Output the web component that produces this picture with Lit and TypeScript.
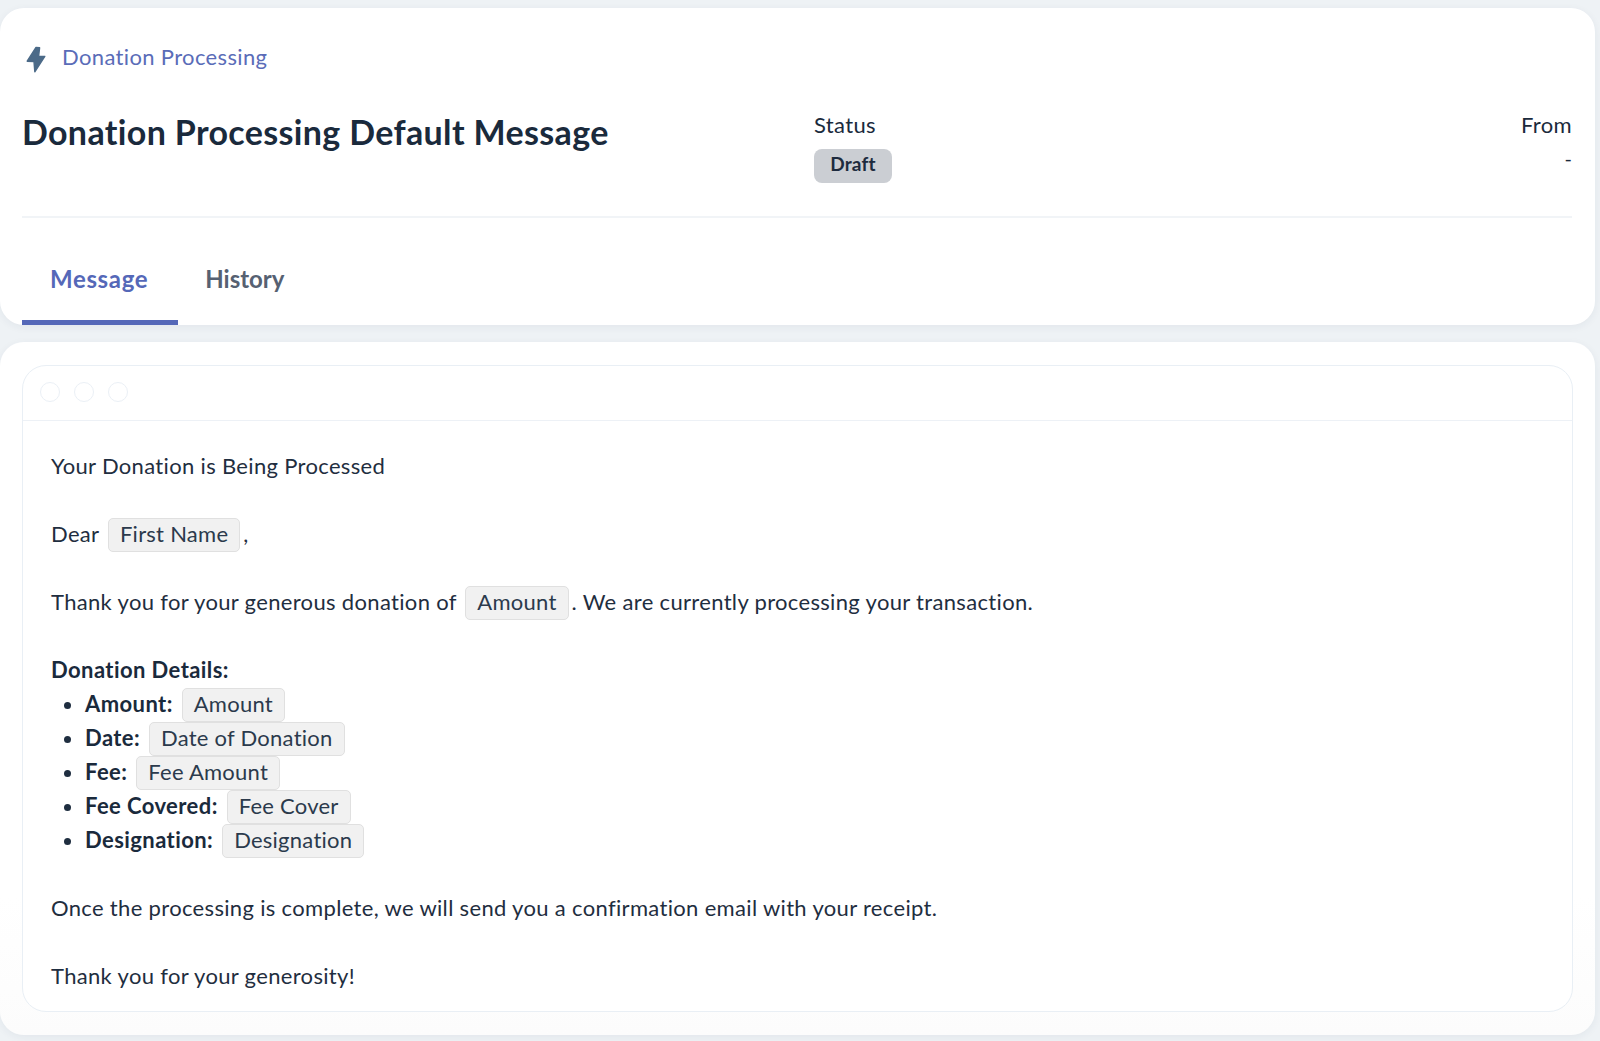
import { LitElement, html, css } from "lit";
import { customElement } from "lit/decorators.js";

const chip = (t: string) => html`<span class="chip">${t}</span>`;

@customElement("app-root")
export class AppRoot extends LitElement {
  static styles = css`
    :host { display: block; min-height: 1041px; background: #eef2f5; font-family: Lato, "Liberation Sans", sans-serif; color: #1a2a3c; box-sizing: border-box; padding: 8px 5px 6px 0; }
    * { box-sizing: border-box; }
    .card { background: #fff; border-radius: 24px; box-shadow: 0 2px 8px rgba(30, 50, 80, 0.06); }
    .top { height: 317px; padding: 0 23px 0 22px; display: flex; flex-direction: column; margin-bottom: 17px; }
    .crumb { display: flex; align-items: center; gap: 16px; padding: 37px 0 0 4px; height: 66px; font-size: 22px; letter-spacing: 0.35px; color: #5a6cb8; }
    .crumb span { margin-bottom: 6px; }
    .crumb svg { width: 20px; height: 27px; flex: none; }
    .head { display: grid; grid-template-columns: 792px 1fr auto; height: 144px; border-bottom: 2px solid #f1f4f7; padding-top: 36px; }
    h1 { margin: 0; font-size: 34px; line-height: 44px; font-weight: 700; letter-spacing: 0.35px; color: #1a2a3c; }
    .label { font-size: 22px; line-height: 30px; letter-spacing: 0.35px; }
    .from { text-align: right; }
    .dash { font-size: 20px; line-height: 24px; margin-top: 6px; }
    .pill { display: inline-flex; align-items: center; justify-content: center; margin-top: 9px; width: 78px; height: 34px; border-radius: 8px; background: #cbced3; font-size: 19px; font-weight: 700; letter-spacing: 0.2px; color: #1d2b3e; padding-bottom: 5px; }
    .tabs { display: flex; }
    .tab { height: 107px; padding: 19px 29px 0 27px; display: flex; align-items: center; font-size: 24px; font-weight: 700; color: #566172; border-bottom: 5px solid transparent; }
    .tab.on { color: #5568b8; border-bottom-color: #5568b8; padding-left: 28px; padding-right: 30px; letter-spacing: 0.65px; }
    .main { height: 693px; padding: 23px 22px 23px; background: linear-gradient(#fff 80%, #fcfcfc); }
    .win { height: 647px; border: 1px solid #e9eff5; border-radius: 24px; background: #fff; }
    .bar { height: 55px; border-bottom: 1px solid #edf1f6; display: flex; align-items: center; gap: 14px; padding: 0 17px 2px; }
    .dot { width: 20px; height: 20px; border-radius: 50%; border: 1px solid #ebf0f6; }
    .body { padding: 28px 28px 0; font-size: 22px; line-height: 34px; letter-spacing: 0.33px; color: #1f2e40; }
    p { margin: 0 0 34px; }
    p.tight { margin: 0; }
    ul { margin: 0 0 34px; padding: 0 0 0 34px; }
    li { height: 34px; }
    b { font-weight: 700; color: #1a2a3c; letter-spacing: 0.42px; }
    .chip { display: inline-block; height: 34px; line-height: 30px; padding: 0 11px; margin: 0 3px -1px; border: 1px solid #e0e0e0; border-radius: 5px; background: #f1f1f1; color: #2b3a4c; vertical-align: baseline; letter-spacing: 0.25px; }
  `;

  render() {
    return html`
      <section class="card top">
        <div class="crumb">
          <svg viewBox="0 0 20 27"><path d="M10 1.5 1.2 15.2 8 15.6 8.8 25.8 18.8 10.4 12.6 10.2 13.6 1.8Z" fill="#4b6a88" stroke="#4b6a88" stroke-width="1.4" stroke-linejoin="round"/></svg>
          <span>Donation Processing</span>
        </div>
        <div class="head">
          <h1>Donation Processing Default Message</h1>
          <div>
            <div class="label">Status</div>
            <span class="pill">Draft</span>
          </div>
          <div class="from">
            <div class="label">From</div>
            <div class="dash">-</div>
          </div>
        </div>
        <nav class="tabs">
          <div class="tab on">Message</div>
          <div class="tab">History</div>
        </nav>
      </section>
      <section class="card main">
        <div class="win">
          <div class="bar"><span class="dot"></span><span class="dot"></span><span class="dot"></span></div>
          <div class="body">
            <p>Your Donation is Being Processed</p>
            <p>Dear ${chip("First Name")},</p>
            <p>Thank you for your generous donation of ${chip("Amount")}. We are currently processing your transaction.</p>
            <p class="tight"><b>Donation Details:</b></p>
            <ul>
              <li><b>Amount:</b> ${chip("Amount")}</li>
              <li><b>Date:</b> ${chip("Date of Donation")}</li>
              <li><b>Fee:</b> ${chip("Fee Amount")}</li>
              <li><b>Fee Covered:</b> ${chip("Fee Cover")}</li>
              <li><b>Designation:</b> ${chip("Designation")}</li>
            </ul>
            <p>Once the processing is complete, we will send you a confirmation email with your receipt.</p>
            <p class="tight">Thank you for your generosity!</p>
          </div>
        </div>
      </section>
    `;
  }
}
